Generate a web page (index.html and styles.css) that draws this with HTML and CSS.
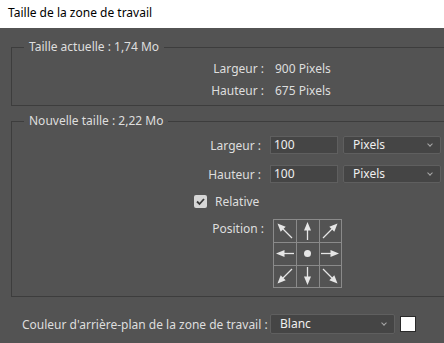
FILE: index.html
```html
<!DOCTYPE html>
<html lang="fr">
<head>
    <meta charset="UTF-8">
    <title>Taille de la zone de travail</title>
    <link rel="stylesheet" href="styles.css">
</head>
<body>
    <div class="title-bar">Taille de la zone de travail</div>

    <div class="panel">
        <fieldset class="group group-current">
            <legend>Taille actuelle : 1,74 Mo</legend>
            <div class="info-row">
                <span class="info-label">Largeur :</span>
                <span class="info-value">900 Pixels</span>
            </div>
            <div class="info-row">
                <span class="info-label">Hauteur :</span>
                <span class="info-value">675 Pixels</span>
            </div>
        </fieldset>

        <fieldset class="group group-new">
            <legend>Nouvelle taille : 2,22 Mo</legend>
            <div class="field-row">
                <span class="field-label">Largeur :</span>
                <div class="text-input">100</div>
                <div class="select select-unit">Pixels<span class="chevron"></span></div>
            </div>
            <div class="field-row">
                <span class="field-label">Hauteur :</span>
                <div class="text-input">100</div>
                <div class="select select-unit">Pixels<span class="chevron"></span></div>
            </div>
            <div class="check-row">
                <span class="checkbox">
                    <svg width="13" height="13" viewBox="0 0 13 13">
                        <path d="M3 6.5 L5.5 9 L10 4" fill="none" stroke="#3a3a3a" stroke-width="1.8"/>
                    </svg>
                </span>
                <span>Relative</span>
            </div>
            <div class="position-row">
                <span class="position-label">Position :</span>
                <svg class="anchor-grid" width="69" height="69" viewBox="0 0 69 69">
                    <g stroke="#8a8a8a" stroke-width="1" fill="none">
                        <rect x="0.5" y="0.5" width="68" height="68"/>
                        <line x1="23.5" y1="0" x2="23.5" y2="69"/>
                        <line x1="46.5" y1="0" x2="46.5" y2="69"/>
                        <line x1="0" y1="23.5" x2="69" y2="23.5"/>
                        <line x1="0" y1="46.5" x2="69" y2="46.5"/>
                    </g>
                    <g stroke="#e6e6e6" stroke-width="1.3">
                        <line x1="34.5" y1="11" x2="34.5" y2="21"/>
                        <line x1="34.5" y1="48" x2="34.5" y2="58"/>
                        <line x1="11" y1="34.5" x2="21" y2="34.5"/>
                        <line x1="48" y1="34.5" x2="58" y2="34.5"/>
                        <line x1="10" y1="10" x2="19" y2="19"/>
                        <line x1="59" y1="10" x2="50" y2="19"/>
                        <line x1="10" y1="59" x2="19" y2="50"/>
                        <line x1="59" y1="59" x2="50" y2="50"/>
                    </g>
                    <g fill="#e6e6e6">
                        <polygon points="34.5,3 31,11.5 38,11.5"/>
                        <polygon points="34.5,66 31,57.5 38,57.5"/>
                        <polygon points="3,34.5 11.5,31 11.5,38"/>
                        <polygon points="66,34.5 57.5,31 57.5,38"/>
                        <polygon points="4.5,4.5 12.7,7.7 7.7,12.7"/>
                        <polygon points="64.5,4.5 56.3,7.7 61.3,12.7"/>
                        <polygon points="4.5,64.5 7.7,56.3 12.7,61.3"/>
                        <polygon points="64.5,64.5 61.3,56.3 56.3,61.3"/>
                        <circle cx="34.5" cy="34.5" r="3.5"/>
                    </g>
                </svg>
            </div>
        </fieldset>

        <div class="bg-row">
            <span class="bg-label">Couleur d'arrière-plan de la zone de travail :</span>
            <div class="select select-bg">Blanc<span class="chevron"></span></div>
            <span class="swatch"></span>
        </div>
    </div>
</body>
</html>
```

FILE: styles.css
```css
* {
    box-sizing: border-box;
    margin: 0;
    padding: 0;
}

html, body {
    width: 444px;
    height: 343px;
    overflow: hidden;
}

body {
    font-family: "Noto Sans", "Open Sans", sans-serif;
    font-size: 12px;
    color: #dedede;
    background: #535353;
}

.title-bar {
    height: 28px;
    line-height: 26px;
    padding-left: 8px;
    background: #ffffff;
    color: #000000;
}

.panel {
    padding: 11px 0 0 11px;
}

.group {
    border: 1px solid #3d3d3d;
    border-right: none;
    margin-right: -20px;
    min-width: 0;
}

.group legend {
    margin-left: 12px;
    padding: 0 5px;
    line-height: 16px;
}

.group-current {
    padding: 2px 0 4px 0;
}

.info-row {
    display: flex;
    height: 22px;
    align-items: center;
}

.info-label {
    width: 252px;
    text-align: right;
}

.info-value {
    margin-left: 11px;
}

.group-new {
    margin-top: 7px;
    padding: 7px 0 8px 0;
}

.field-row {
    display: flex;
    align-items: center;
    height: 18px;
    margin-bottom: 11px;
}

.field-label {
    width: 249px;
    text-align: right;
}

.text-input {
    width: 68px;
    height: 18px;
    margin-left: 9px;
    padding-left: 3px;
    line-height: 16px;
    background: #454545;
    border: 1px solid #5f5f5f;
    color: #f0f0f0;
}

.select {
    position: relative;
    height: 18px;
    padding-left: 9px;
    line-height: 16px;
    background: #454545;
    border: 1px solid #5f5f5f;
    border-radius: 2px;
    color: #f0f0f0;
}

.select-unit {
    width: 98px;
    margin-left: 5px;
}

.chevron {
    position: absolute;
    right: 8px;
    top: 5px;
    width: 4px;
    height: 4px;
    border-right: 1px solid #a8a8a8;
    border-bottom: 1px solid #a8a8a8;
    transform: rotate(45deg);
}

.check-row {
    display: flex;
    align-items: center;
    gap: 8px;
    height: 18px;
    padding-left: 182px;
    margin-top: -2px;
}

.checkbox {
    display: block;
    width: 13px;
    height: 13px;
    background: #d6d6d6;
    border-radius: 2px;
}

.checkbox svg {
    display: block;
}

.position-row {
    display: flex;
    align-items: flex-start;
    margin-top: 9px;
}

.position-label {
    width: 252px;
    padding-top: 2px;
    text-align: right;
    line-height: 16px;
}

.anchor-grid {
    display: block;
    margin-left: 9px;
}

.bg-row {
    display: flex;
    align-items: center;
    height: 20px;
    margin-top: 17px;
    padding-left: 11px;
}

.bg-label {
    width: 248px;
}

.select-bg {
    width: 125px;
    height: 20px;
    line-height: 18px;
    margin-left: 0;
}

.select-bg .chevron {
    top: 6px;
}

.swatch {
    width: 16px;
    height: 16px;
    margin-left: 5px;
    background: #ffffff;
    border: 1px solid #2a2a2a;
}
```
